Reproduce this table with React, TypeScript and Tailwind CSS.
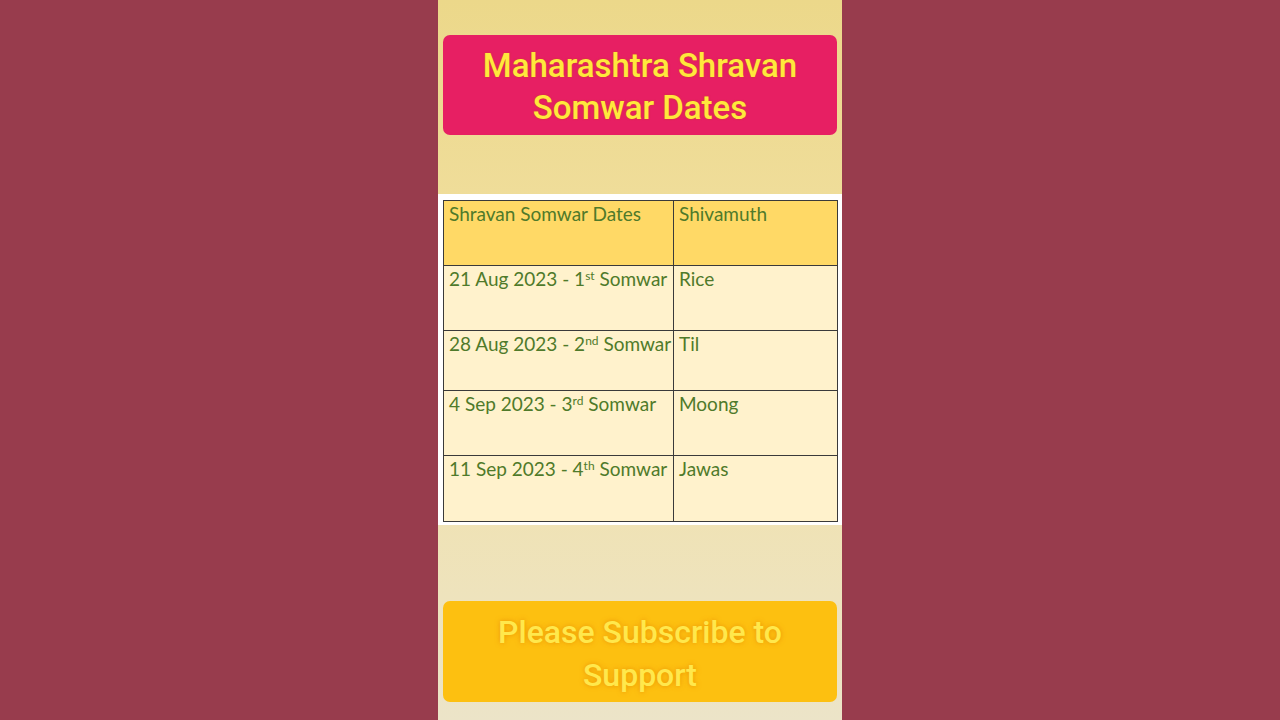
import React from "react";

const rows: { date: string; ord: string; sup: string; item: string; h: string }[] = [
  { date: "21 Aug 2023 - ", ord: "1", sup: "st", item: "Rice", h: "h-[65px]" },
  { date: "28 Aug 2023 - ", ord: "2", sup: "nd", item: "Til", h: "h-[60px]" },
  { date: "4 Sep 2023 - ", ord: "3", sup: "rd", item: "Moong", h: "h-[65px]" },
  { date: "11 Sep 2023 - ", ord: "4", sup: "th", item: "Jawas", h: "h-[65px]" },
];

export default function App() {
  return (
    <div className="w-[1280px] h-[720px] flex bg-[#983c4d] overflow-hidden">
      <div className="w-[438px] h-full bg-[#983c4d]" />
      <div className="w-[404px] h-full flex flex-col bg-gradient-to-b from-[#ecd88a] via-[#f2e1a6] to-[#ece4c8]">
        <div className="h-[35px]" />
        <div className="mx-[5px] h-[100px] rounded-[7px] bg-[#e71f63] flex flex-col items-center justify-center pt-[4px]">
          <div
            className="text-[#ffe83c] text-[33px] leading-[42px] font-medium text-center [text-shadow:0_0_2px_rgba(180,90,0,0.6)]"
            style={{ fontFamily: "Roboto, 'Liberation Sans', sans-serif" }}
          >
            <div>Maharashtra Shravan</div>
            <div>Somwar Dates</div>
          </div>
        </div>
        <div className="h-[59px]" />
        <div className="h-[331px] bg-white pt-[6px] pl-[5px] pr-[4px]">
          <div
            className="w-[395px] border-[1.5px] border-[#3a3a3a] text-[#4f7a2a] text-[19px]"
            style={{ fontFamily: "Lato, 'Open Sans', sans-serif" }}
          >
            <div className="flex h-[65px] bg-[#ffd966] border-b-[1.5px] border-[#3a3a3a]">
              <div className="w-[230px] border-r-[1.5px] border-[#3a3a3a] px-[5px] pt-[1px] leading-[24px]">
                Shravan Somwar Dates
              </div>
              <div className="flex-1 px-[5px] pt-[1px] leading-[24px]">Shivamuth</div>
            </div>
            {rows.map((r, i) => (
              <div
                key={i}
                className={`flex ${r.h} bg-[#fff2cc] ${i < rows.length - 1 ? "border-b-[1.5px] border-[#3a3a3a]" : ""}`}
              >
                <div className="w-[230px] border-r-[1.5px] border-[#3a3a3a] pl-[5px] pt-[1px] leading-[24px] whitespace-nowrap">
                  {r.date}
                  {r.ord}
                  <sup className="text-[12px]">{r.sup}</sup> Somwar
                </div>
                <div className="flex-1 px-[5px] pt-[1px] leading-[24px]">{r.item}</div>
              </div>
            ))}
          </div>
        </div>
        <div className="h-[76px]" />
        <div className="mx-[5px] h-[101px] rounded-[7px] bg-[#fdc010] flex flex-col items-center justify-center pt-[4px]">
          <div
            className="text-[#ffe84c] text-[32px] leading-[43px] font-medium text-center [text-shadow:0_0_5px_rgba(230,130,0,0.7)]"
            style={{ fontFamily: "Roboto, 'Liberation Sans', sans-serif" }}
          >
            <div>Please Subscribe to</div>
            <div>Support</div>
          </div>
        </div>
        <div className="h-[18px]" />
      </div>
      <div className="flex-1 h-full bg-[#983c4d]" />
    </div>
  );
}
